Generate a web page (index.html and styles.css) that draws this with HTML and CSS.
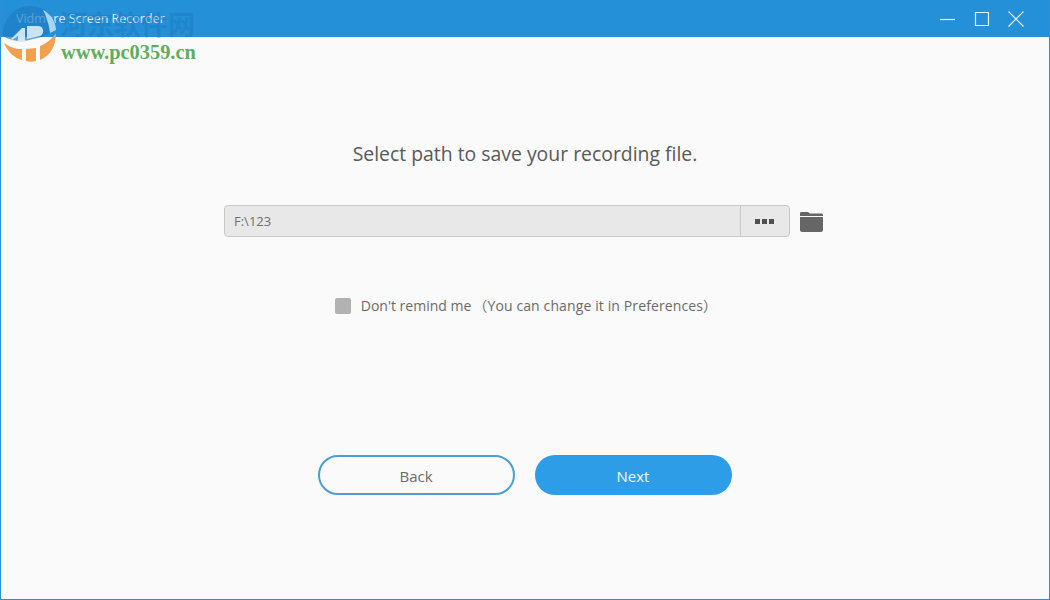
FILE: index.html
```html
<!DOCTYPE html>
<html lang="en">
<head>
    <meta charset="UTF-8">
    <title>Vidmore Screen Recorder</title>
    <link rel="stylesheet" href="styles.css">
</head>
<body>
    <div class="window">
        <div class="titlebar">
            <div class="app-name">Vidmore Screen Recorder</div>
            <div class="window-controls">
                <svg class="win-icon" viewBox="0 0 16 16"><path d="M0 8.500H15"/></svg>
                <svg class="win-icon" viewBox="0 0 16 16"><path d="M1.500 1.500H14.500V14.500H1.500Z"/></svg>
                <svg class="win-icon" viewBox="0 0 16 16"><path d="M.5 .5L15.500 15.500M15.500 .5L.5 15.500"/></svg>
            </div>
        </div>

        <div class="content">
            <h1>Select path to save your recording file.</h1>

            <div class="path-row">
                <div class="path-box">
                    <div class="path-value">F:\123</div>
                    <div class="browse">
                        <span class="dot"></span><span class="dot"></span><span class="dot"></span>
                    </div>
                </div>
                <svg class="folder" viewBox="0 0 23 20">
                    <path d="M0 4V1.500C0 .5 .5 0 1.500 0H8L10 1.500H21.500C22.500 1.500 23 2 23 3V4Z"/>
                    <path d="M0 5H23V18C23 19 22 20 21 20H2C1 20 0 19 0 18Z"/>
                </svg>
            </div>

            <label class="remind">
                <span class="checkbox"></span>
                <span class="remind-text">Don't remind me<span class="hint">（You can change it in Preferences）</span></span>
            </label>

            <div class="actions">
                <button class="btn btn-back">Back</button>
                <button class="btn btn-next">Next</button>
            </div>
        </div>
    </div>

    <!-- site watermark over the top left corner -->
    <div class="watermark">
        <svg class="wm-logo" viewBox="0 0 60 64">
            <path class="wm-blue" d="M3 36C3 18 15 6 30 6C44 6 56 17 56 28C48 35 40 38 33 39C24 42 12 42 3 36Z"/>
            <path class="wm-pale" d="M45 11C52 16 56 23 56 30L50 33C49 25 47 17 43 10Z"/>
            <path class="wm-white" d="M11 39L22 28H25V42H18V36L12 40Z"/>
            <path class="wm-white" d="M27 26H38C44 26 45 34 40 36L27 39Z"/>
            <path class="wm-orange" d="M4 43C10 47 15 49 22 49V60C14 58 8 52 4 43Z"/>
            <path class="wm-orange" d="M26 49L36 48V61C32 62 29 62 26 61Z"/>
            <path class="wm-orange" d="M40 46C46 44 52 39 56 33C56 46 50 56 40 60Z"/>
        </svg>
        <div class="wm-cn">河东软件网</div>
        <div class="wm-url">www.pc0359.cn</div>
    </div>
</body>
</html>
```

FILE: styles.css
```css
* {
    margin: 0;
    padding: 0;
    box-sizing: border-box;
}

body {
    font-family: "Open Sans", "Noto Sans CJK SC", sans-serif;
    width: 1050px;
    height: 600px;
    overflow: hidden;
    position: relative;
}

.window {
    width: 1050px;
    height: 600px;
    background: #fafafa;
    border: 1px solid #2a90d3;
    border-top: none;
    display: flex;
    flex-direction: column;
}

.titlebar {
    height: 37px;
    background: #2490d8;
    display: flex;
    justify-content: space-between;
    align-items: center;
    padding: 0 25px 0 15px;
    flex-shrink: 0;
}

.app-name {
    color: #e2f0fa;
    font-size: 12.5px;
}

.window-controls {
    display: flex;
    gap: 18px;
    align-items: center;
}

.win-icon {
    width: 16px;
    height: 16px;
    fill: none;
    stroke: #e8f4fc;
    stroke-width: 1.2;
}

.content {
    flex: 1;
    display: flex;
    flex-direction: column;
    align-items: center;
}

h1 {
    margin-top: 104px;
    font-size: 19.400px;
    font-weight: 400;
    line-height: 26px;
    color: #595959;
}

.path-row {
    margin-top: 38px;
    display: flex;
    align-items: center;
    gap: 10px;
    width: 600px;
    margin-right: 2px;
}

.path-box {
    width: 566px;
    height: 32px;
    display: flex;
    background: #e8e8e8;
    border: 1px solid #c8c8c8;
    border-radius: 4px;
}

.path-value {
    flex: 1;
    padding-left: 9px;
    font-size: 13px;
    line-height: 31px;
    color: #707070;
}

.browse {
    width: 49px;
    border-left: 1px solid #c8c8c8;
    display: flex;
    justify-content: center;
    align-items: center;
    gap: 2px;
    padding-right: 2px;
}

.dot {
    width: 5px;
    height: 5px;
    background: #505050;
}

.folder {
    width: 23px;
    height: 20px;
    margin-top: 2px;
    fill: #666666;
}

.remind {
    margin-top: 60px;
    margin-right: -2px;
    display: flex;
    align-items: center;
    gap: 10px;
    font-size: 14px;
    color: #6b6b6b;
    height: 18px;
}

.remind-text {
    line-height: 16px;
}

.hint {
    margin-left: 2px;
    letter-spacing: 0.12px;
}

.checkbox {
    width: 16px;
    height: 16px;
    background: #b2b2b2;
    border-radius: 2px;
}

.actions {
    margin-top: 140px;
    display: flex;
    gap: 20px;
    margin-right: 1px;
}

.btn {
    width: 197px;
    height: 40px;
    padding-top: 2px;
    border-radius: 20px;
    font-family: inherit;
    font-size: 15px;
}

.btn-back {
    background: transparent;
    border: 2px solid #4b9fd0;
    color: #6b6b6b;
}

.btn-next {
    background: #2d9de8;
    border: none;
    color: #eef8ff;
}

/* watermark */
.watermark {
    position: absolute;
    left: 0;
    top: 0;
    width: 200px;
    height: 64px;
}

.wm-logo {
    position: absolute;
    left: 0;
    top: 0;
    width: 60px;
    height: 64px;
}

.wm-blue {
    fill: #1f7cc4;
    opacity: 0.7;
}

.wm-pale {
    fill: #a9d5f2;
}

.wm-white {
    fill: #dcedf9;
    opacity: 0.9;
}

.wm-orange {
    fill: #f0a050;
}

.wm-cn {
    position: absolute;
    left: 60px;
    top: 9px;
    font-family: "Noto Sans CJK SC", sans-serif;
    font-size: 27px;
    font-weight: 700;
    line-height: 30px;
    color: #1f78c0;
    opacity: 0.45;
}

.wm-url {
    position: absolute;
    left: 61px;
    top: 41px;
    font-family: "Liberation Serif", serif;
    font-size: 20.400px;
    font-weight: 700;
    line-height: 22px;
    color: #5fae5f;
}
```
